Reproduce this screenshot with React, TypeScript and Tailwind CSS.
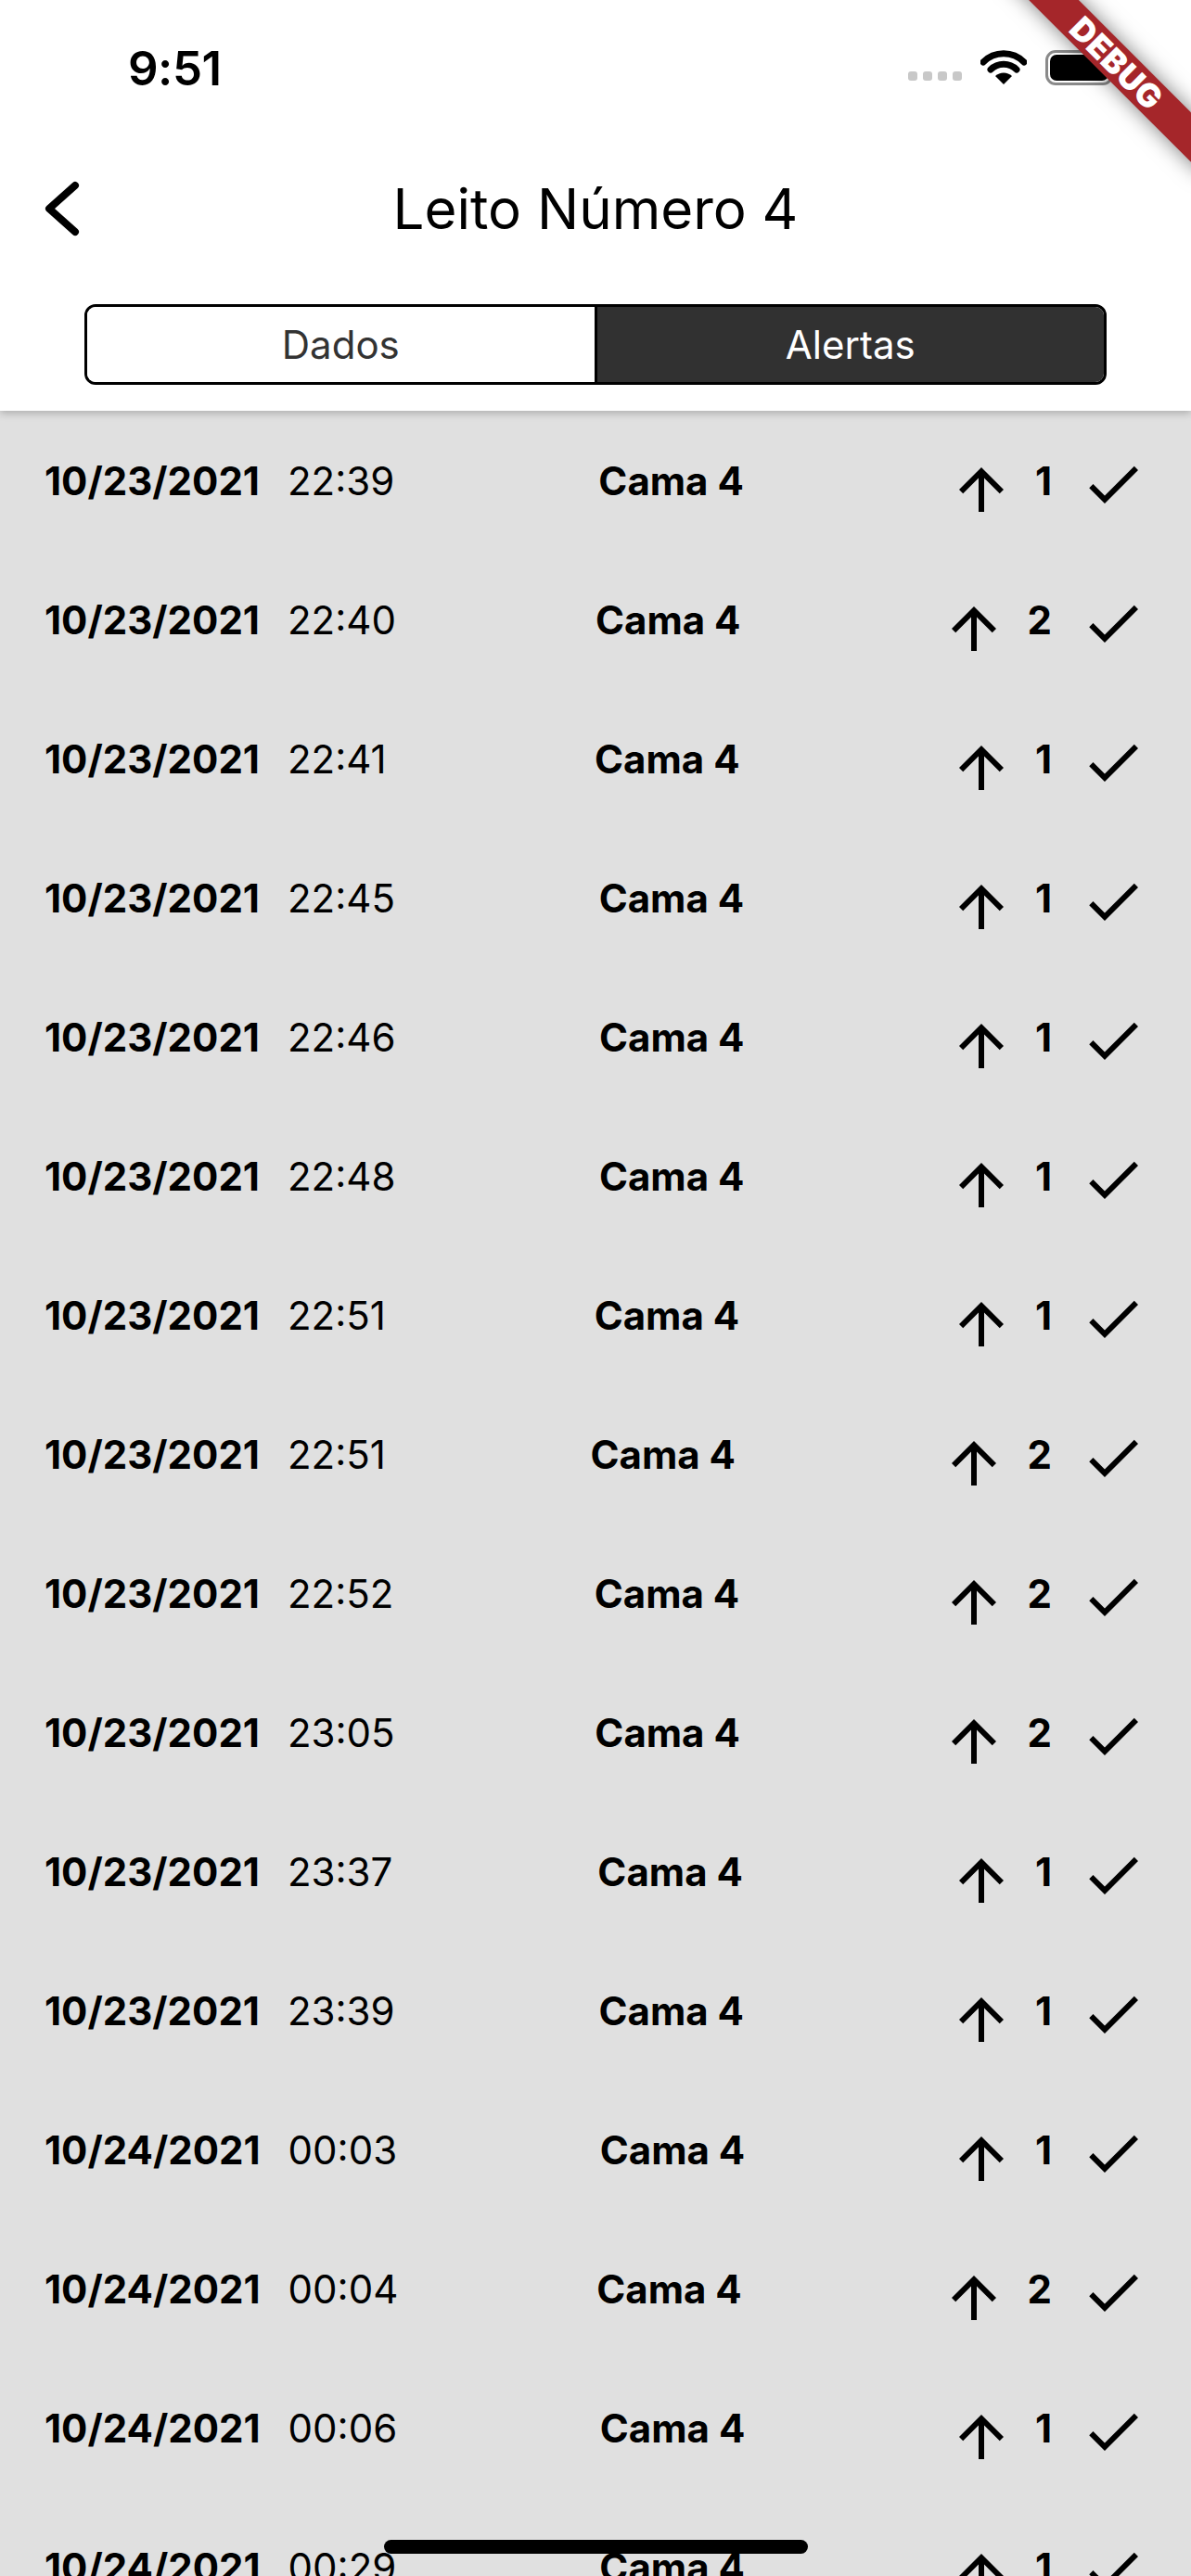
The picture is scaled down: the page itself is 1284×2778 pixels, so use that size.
import React from "react";

type Alert = { date: string; time: string; level: number };

const alerts: Alert[] = [
  { date: "10/23/2021", time: "22:39", level: 1 },
  { date: "10/23/2021", time: "22:40", level: 2 },
  { date: "10/23/2021", time: "22:41", level: 1 },
  { date: "10/23/2021", time: "22:45", level: 1 },
  { date: "10/23/2021", time: "22:46", level: 1 },
  { date: "10/23/2021", time: "22:48", level: 1 },
  { date: "10/23/2021", time: "22:51", level: 1 },
  { date: "10/23/2021", time: "22:51", level: 2 },
  { date: "10/23/2021", time: "22:52", level: 2 },
  { date: "10/23/2021", time: "23:05", level: 2 },
  { date: "10/23/2021", time: "23:37", level: 1 },
  { date: "10/23/2021", time: "23:39", level: 1 },
  { date: "10/24/2021", time: "00:03", level: 1 },
  { date: "10/24/2021", time: "00:04", level: 2 },
  { date: "10/24/2021", time: "00:06", level: 1 },
  { date: "10/24/2021", time: "00:29", level: 1 },
];

function ArrowUp() {
  return (
    <svg viewBox="0 0 24 24" className="mt-[20px] h-[72px] w-[72px] shrink-0" fill="#000">
      <path d="M4 12l1.41 1.41L11 7.83V20h2V7.83l5.58 5.59L20 12l-8-8-8 8z" />
    </svg>
  );
}

function Check() {
  return (
    <svg viewBox="0 0 24 24" className="mt-[8px] h-[72px] w-[72px] shrink-0" fill="#000">
      <path d="M9 16.17L4.83 12l-1.42 1.41L9 19 21 7l-1.41-1.41z" />
    </svg>
  );
}

function StatusBar() {
  return (
    <div className="flex h-[141px] items-center justify-between pl-[138px] pr-[84px] pt-[5px]">
      <span className="text-[51px] font-semibold leading-none tracking-[-0.5px] text-black">9:51</span>
      <div className="flex items-center">
        <div className="mt-[18px] flex gap-[6px]">
          {[0, 1, 2, 3].map((i) => (
            <span key={i} className="h-[10px] w-[10px] rounded-[3px] bg-[#c8c8c8]" />
          ))}
        </div>
        <svg viewBox="0 0 50 38" className="ml-[20px] h-[38px] w-[50px]">
          <path d="M3 13 A31 31 0 0 1 47 13" fill="none" stroke="#000" strokeWidth="7" strokeLinecap="round" />
          <path d="M11 21 A20 20 0 0 1 39 21" fill="none" stroke="#000" strokeWidth="7" strokeLinecap="round" />
          <path d="M25 37 L16 28 A13 13 0 0 1 34 28 Z" fill="#000" />
        </svg>
        <div className="ml-[20px] flex h-[38px] w-[73px] items-center justify-center rounded-[11px] border-[3px] border-[#8a8a8a]">
          <div className="h-[28px] w-[63px] rounded-[7px] bg-black" />
        </div>
      </div>
    </div>
  );
}

function Toolbar() {
  return (
    <div className="flex h-[168px] items-center">
      <div className="flex w-[140px] items-center pl-[46px]">
        <svg viewBox="0 0 40 62" className="h-[62px] w-[40px]">
          <polyline
            points="35,6 7,31 35,56"
            fill="none"
            stroke="#000"
            strokeWidth="8"
            strokeLinecap="round"
            strokeLinejoin="round"
          />
        </svg>
      </div>
      <h1 className="flex-1 text-center text-[60px] font-normal leading-none text-black">Leito Número 4</h1>
      <div className="w-[140px]" />
    </div>
  );
}

function Segments() {
  return (
    <div className="px-[91px] pt-[19px] pb-[28px]">
      <div className="flex h-[87px] overflow-hidden rounded-[12px] border-[3px] border-black">
        <div className="flex flex-1 items-center justify-center border-r-[3px] border-black bg-white text-[42px] text-[#333]">
          Dados
        </div>
        <div className="flex flex-1 items-center justify-center bg-[#313131] text-[42px] text-white">Alertas</div>
      </div>
    </div>
  );
}

function AlertRow({ a }: { a: Alert }) {
  return (
    <div className="flex h-[150px] items-center justify-between px-[48px] text-[42px] text-black">
      <div className="flex items-center">
        <span className="font-bold">{a.date}</span>
        <span className="ml-[30px] font-normal">{a.time}</span>
      </div>
      <span className="font-bold">Cama 4</span>
      <div className="flex items-center">
        <ArrowUp />
        <span className="ml-[22px] mr-[30px] font-bold">{a.level}</span>
        <Check />
      </div>
    </div>
  );
}

export default function App() {
  return (
    <div className="relative h-[2778px] w-[1284px] overflow-hidden bg-[#e0e0e0] font-['Inter','Noto_Sans',sans-serif]">
      <header className="relative z-10 bg-white shadow-[0_3px_8px_rgba(0,0,0,0.22)]">
        <StatusBar />
        <Toolbar />
        <Segments />
      </header>

      <div>
        {alerts.map((a, i) => (
          <AlertRow key={i} a={a} />
        ))}
      </div>

      <div className="absolute bottom-[24px] left-[414px] z-20 h-[15px] w-[457px] rounded-full bg-black" />

      <div className="pointer-events-none absolute left-[1054px] top-[49px] z-30 flex h-[38px] w-[300px] rotate-45 items-center justify-center bg-[#a5262a] shadow-[0_0_22px_rgba(0,0,0,0.5)]">
        <span className="text-[35px] font-black leading-none tracking-[0.5px] text-white">DEBUG</span>
      </div>
    </div>
  );
}
